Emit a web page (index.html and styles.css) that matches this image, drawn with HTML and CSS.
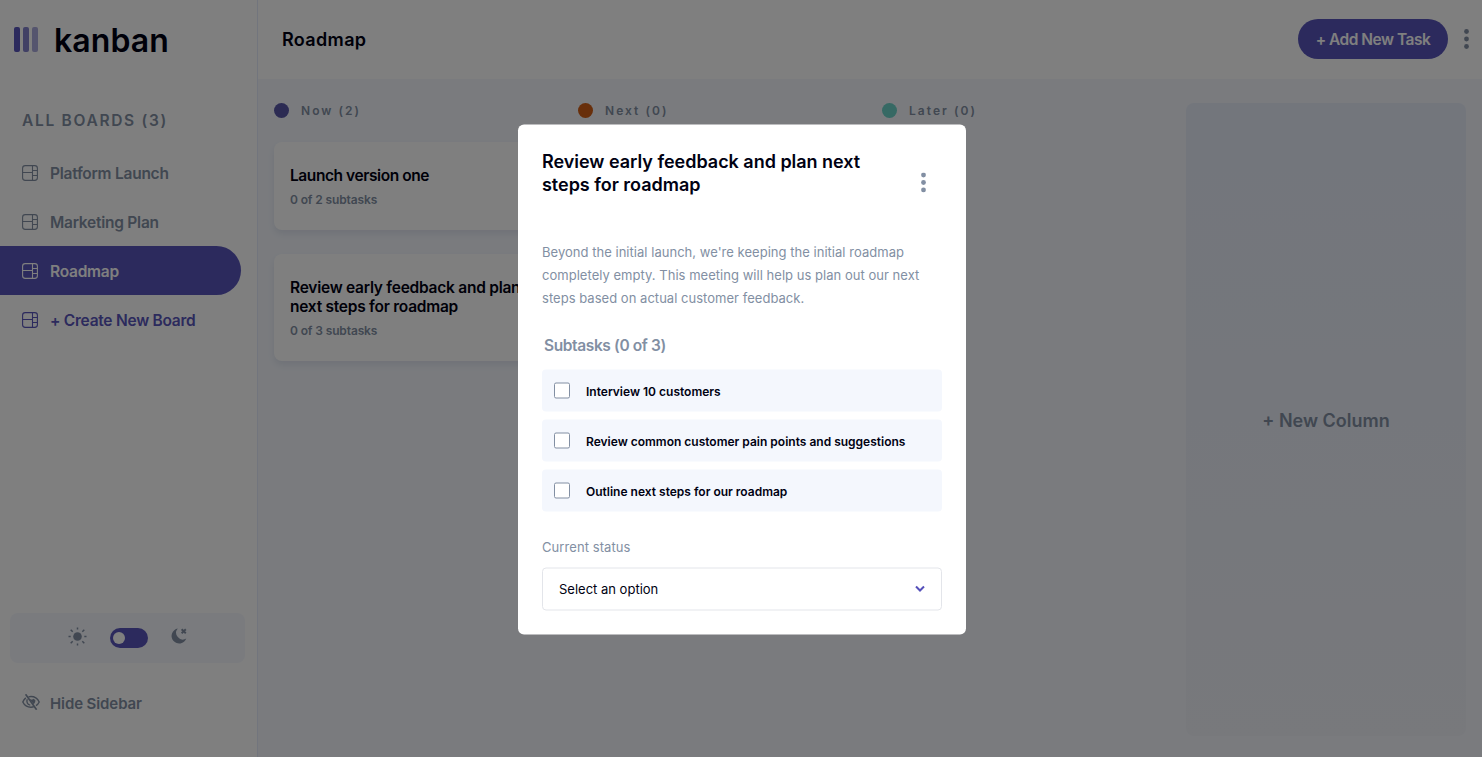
FILE: index.html
```
<!DOCTYPE html>
<html lang="en">
<head>
<meta charset="utf-8">
<title>Kanban</title>
<link rel="stylesheet" href="styles.css">
</head>
<body>
<svg class="defs" width="0" height="0">
  <symbol id="board" viewBox="0 0 16 16"><g fill="none" stroke="currentColor" stroke-width="1.1"><rect x=".6" y=".6" width="14.8" height="14.8" rx="2.6"/><path d="M10.5.6v14.8M.6 7.5h9.9M10.5 5.5h4.9M10.5 10.5h4.9"/></g></symbol>
  <symbol id="kebab" viewBox="0 0 5 20"><g fill="currentColor"><circle cx="2.5" cy="2.5" r="2.4"/><circle cx="2.5" cy="10" r="2.4"/><circle cx="2.5" cy="17.5" r="2.4"/></g></symbol>
</svg>
<div class="app">
  <aside class="sidebar">
    <div class="logo">
      <svg width="24" height="25" viewBox="0 0 24 25"><g fill="#5855ba"><rect width="6" height="25" rx="2"/><rect x="9" width="6" height="25" rx="2" opacity=".75"/><rect x="18" width="6" height="25" rx="2" opacity=".5"/></g></svg>
      <span class="logo-text">kanban</span>
    </div>
    <h2 class="boards-title">ALL BOARDS (3)</h2>
    <nav class="boards">
      <a class="board"><svg class="board-icon"><use href="#board"/></svg><span>Platform Launch</span></a>
      <a class="board"><svg class="board-icon"><use href="#board"/></svg><span>Marketing Plan</span></a>
      <a class="board active"><svg class="board-icon"><use href="#board"/></svg><span>Roadmap</span></a>
      <a class="board create"><svg class="board-icon"><use href="#board"/></svg><span>+ Create New Board</span></a>
    </nav>
    <div class="theme">
      <svg class="theme-icon" width="19" height="19" viewBox="0 0 19 19"><circle cx="9.5" cy="9.5" r="4.3" fill="currentColor"/><path d="M9.5.5v2M9.5 16.5v2M.5 9.5h2.2M16.3 9.5h2.2M2.7 2.7l2 2M14.3 14.3l2 2M16.3 2.7l-2 2M4.7 14.3l-2 2" stroke="currentColor" stroke-width="1.5"/></svg>
      <span class="toggle"><span class="knob"></span></span>
      <svg class="theme-icon" width="16" height="16" viewBox="0 0 16 16"><path d="M6.8.5A7.6 7.6 0 1 0 15.3 10.6 6.7 6.7 0 0 1 6.8.5Z" fill="currentColor"/><path d="M10.6 1.3l4.2 4M14.8 1.3l-4.2 4" stroke="currentColor" stroke-width="1.9"/></svg>
    </div>
    <div class="hide">
      <svg width="18" height="16" viewBox="0 0 18 16" fill="none" stroke="currentColor" stroke-width="1.4"><path d="M3.8 3.9C2.5 5 1.5 6.300.8 8c1.600 3.300 4.600 5.200 8.200 5.200 1 0 1.900-.1 2.800-.5M6.500 2.900C7.300 2.600 8.200 2.500 9 2.500c3.600 0 6.600 2.200 8.200 5.500-.7 1.500-1.800 2.800-3.200 3.700"/><path d="M5.300 5.300c-1.200 2.600.2 5.300 3 5.800"/><path d="M7.500 5l2.500.8 1.300-1 2 1.200c.3 1.800-.3 3-1.600 4.200Z" fill="currentColor" stroke="none"/><path d="M3.600.3l11 15.400" stroke-width="1.7"/></svg>
      <span>Hide Sidebar</span>
    </div>
  </aside>
  <div class="main">
    <header class="header">
      <h1 class="board-name">Roadmap</h1>
      <button class="add">+ Add New Task</button>
      <svg class="kebab"><use href="#kebab"/></svg>
    </header>
    <section class="columns">
      <div class="column">
        <div class="column-title"><i class="dot now"></i><span>Now (2)</span></div>
        <article class="card"><h3>Launch version one</h3><p>0 of 2 subtasks</p></article>
        <article class="card long"><h3>Review early feedback and plan<br>next steps for roadmap</h3><p>0 of 3 subtasks</p></article>
      </div>
      <div class="column"><div class="column-title"><i class="dot next"></i><span>Next (0)</span></div></div>
      <div class="column"><div class="column-title"><i class="dot later"></i><span>Later (0)</span></div></div>
      <div class="new-column"><span>+ New Column</span></div>
    </section>
  </div>
</div>
<div class="overlay">
  <div class="modal">
    <div class="modal-head">
      <h2 class="modal-title">Review early feedback and plan next<br>steps for roadmap</h2>
      <svg class="kebab"><use href="#kebab"/></svg>
    </div>
    <p class="desc">Beyond the initial launch, we're keeping the initial roadmap<br>completely empty. This meeting will help us plan out our next<br>steps based on actual customer feedback.</p>
    <h3 class="sub-title">Subtasks (0 of 3)</h3>
    <div class="subtasks">
      <label class="subtask"><i class="box"></i><span>Interview 10 customers</span></label>
      <label class="subtask"><i class="box"></i><span>Review common customer pain points and suggestions</span></label>
      <label class="subtask"><i class="box"></i><span>Outline next steps for our roadmap</span></label>
    </div>
    <div class="status-label">Current status</div>
    <div class="select"><span>Select an option</span><svg width="10" height="7" viewBox="0 0 10 7"><path d="M1 1l4 4 4-4" fill="none" stroke="#5550ba" stroke-width="2"/></svg></div>
  </div>
</div>
</body>
</html>
```
FILE: styles.css
```
* { box-sizing: border-box; margin: 0; }
body { font-family: Inter, "Liberation Sans", sans-serif; color: #000112; overflow: hidden; }
h1, h2, h3 { font-weight: 600; }
.defs { position: absolute; }
.app { display: flex; width: 100vw; height: 757px; background: #f4f7fd; }
.sidebar { width: 258px; flex: none; background: #fff; border-right: 1px solid #e4ebfa; color: #828fa3; display: flex; flex-direction: column; }
.logo { display: flex; align-items: center; gap: 16px; padding-left: 14px; height: 79px; }
.logo-text { color: #000112; font-size: 32px; font-weight: 600; letter-spacing: .1px; line-height: 40px; padding-top: 2px; }
.boards-title { font-size: 15.5px; line-height: 20px; letter-spacing: 1.7px; padding-left: 22px; margin-top: 32px; }
.boards { margin-top: 17px; }
.board { display: flex; align-items: center; gap: 12px; height: 49px; width: 241px; padding-left: 22px; font-size: 15.5px; font-weight: 600; letter-spacing: -.25px; border-radius: 0 25px 25px 0; }
.board span { padding-top: 2px; }
.board-icon { width: 16px; height: 16px; }
.active { background: #5855ba; color: #fff; }
.create { color: #5855ba; }
.theme { margin: 269px 12px 0 10px; height: 50px; border-radius: 8px; background: #f4f7fd; display: flex; align-items: center; justify-content: center; gap: 23px; }
.theme-icon { margin-bottom: 4px; }
.toggle { display: flex; align-items: center; width: 38px; height: 20px; border-radius: 10px; background: #5855ba; padding-left: 3px; }
.knob { width: 12px; height: 12px; border-radius: 50%; background: #fff; }
.hide { display: flex; align-items: center; gap: 10px; padding-left: 22px; margin-top: 30px; height: 20px; font-size: 15px; font-weight: 600; letter-spacing: -.1px; }
.hide svg { margin-bottom: 2px; }
.main { flex: 1; display: flex; flex-direction: column; }
.header { height: 79px; background: #fff; display: flex; align-items: center; padding: 0 13px 1px 24px; }
.board-name { font-size: 18px; letter-spacing: .35px; flex: 1; }
.add { width: 150px; height: 40px; border: 0; border-radius: 20px; background: #5855ba; color: #fff; font: 600 15.5px Inter, sans-serif; letter-spacing: -.5px; padding: 0; margin-right: 16px; }
.kebab { width: 5px; height: 20px; color: #828fa3; }
.columns { flex: 1; display: grid; grid-template-columns: repeat(4, 280px); gap: 24px; padding: 24px 16px 21px; }
.column-title { display: flex; align-items: center; gap: 12px; height: 15px; margin-bottom: 24px; font-size: 12px; font-weight: 600; letter-spacing: 2.05px; color: #828fa3; }
.dot { width: 15px; height: 15px; border-radius: 50%; }
.now { background: #5857a7; }
.next { background: #d05e16; }
.later { background: #6cd2c8; }
.card { background: #fff; border-radius: 8px; padding: 24px 16px 23px; margin-bottom: 24px; box-shadow: 0 4px 6px rgba(54, 78, 126, .1); }
.card h3 { font-size: 15.5px; line-height: 19px; letter-spacing: -.42px; white-space: nowrap; }
.card.long h3 { letter-spacing: -.25px; }
.card p { font-size: 12px; line-height: 15px; letter-spacing: -.13px; margin-top: 7px; font-weight: 600; color: #828fa3; }
.new-column { border-radius: 8px; background: linear-gradient(#e6ecf9, #f0f2f9); display: flex; align-items: center; justify-content: center; padding-top: 2px; color: #828fa3; font-size: 18px; font-weight: 600; }
.overlay { position: absolute; inset: 0; background: rgba(0, 0, 0, .5); display: flex; justify-content: center; align-items: center; padding: 2px 0 0 2px; }
.modal { width: 448px; height: 510px; border-radius: 6px; background: #fff; padding: 24px; transform: translateY(-.5px); }
.modal-head { display: flex; height: 92px; justify-content: space-between; padding-right: 16px; }
.modal-title { font-size: 18px; line-height: 23px; letter-spacing: -.02px; padding-top: 1px; }
.modal-head .kebab { margin-top: 24px; }
.desc { font-size: 13px; line-height: 23.4px; letter-spacing: .03px; color: #828fa3; white-space: nowrap; }
.sub-title { margin: 25px 0 14px 2px; font-size: 15.5px; line-height: 20px; letter-spacing: -.38px; color: #828fa3; }
.subtasks { display: grid; gap: 8px; }
.subtask { display: flex; align-items: center; gap: 16px; height: 42px; padding-left: 12px; border-radius: 4px; background: #f4f7fd; font-size: 12px; font-weight: 600; white-space: nowrap; }
.subtask span { padding-top: 2px; }
.box { width: 16px; height: 16px; border: 1px solid #828fa3; border-radius: 2px; background: #fff; }
.status-label { margin: 25px 0 11px; font-size: 13px; line-height: 20px; letter-spacing: .08px; color: #828fa3; }
.select { height: 43px; border: 1px solid #e3e5ea; border-radius: 4px; display: flex; align-items: center; justify-content: space-between; padding: 0 16px; font-size: 13px; }
```
